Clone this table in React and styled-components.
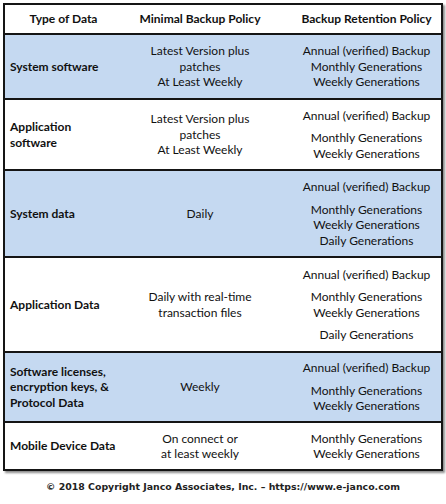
import React from "react";
import styled, { createGlobalStyle } from "styled-components";

const Global = createGlobalStyle`
  html, body { margin: 0; padding: 0; background: #fff; }
  body { font-family: Lato, "Open Sans", sans-serif; color: #111; }
`;

const Page = styled.div`
  width: 446px;
  height: 504px;
  padding: 3px 0 0 3px;
  box-sizing: border-box;
  display: flex;
  flex-direction: column;
`;

const Table = styled.div`
  width: 440px;
  box-sizing: border-box;
  border: 2px solid #151515;
  box-shadow: 2px 2px 2px rgba(0, 0, 0, 0.45);
  display: flex;
  flex-direction: column;
`;

const Row = styled.div`
  display: grid;
  grid-template-columns: 117px 156px 1fr;
  height: ${(p) => p.$h}px;
  box-sizing: border-box;
  background: ${(p) => (p.$blue ? "#c5d9f1" : "#fff")};
  border-bottom: ${(p) => (p.$last ? "none" : "2px solid #151515")};
`;

const Cell = styled.div`
  display: flex;
  flex-direction: column;
  justify-content: center;
  align-items: ${(p) => (p.$left ? "flex-start" : "center")};
  text-align: ${(p) => (p.$left ? "left" : "center")};
  padding-left: ${(p) => p.$pl || 0}px;
  font-size: 12px;
  line-height: 15.5px;
  font-weight: ${(p) => (p.$bold ? 700 : 400)};
  white-space: nowrap;
`;

const Line = styled.div`
  margin-top: ${(p) => (p.$gap ? 7 : 0)}px;
`;

const Footer = styled.div`
  margin-top: 10px;
  width: 440px;
  text-align: center;
  font-family: "DejaVu Sans", Verdana, sans-serif;
  font-weight: 700;
  font-size: 9.4px;
  color: #222;
`;

const rows = [
  {
    h: 65, blue: true,
    c1: ["System software"],
    c2: ["Latest Version plus", "patches", "At Least Weekly"],
    c3: [["Annual (verified) Backup"], ["Monthly Generations"], ["Weekly Generations"]],
  },
  {
    h: 71,
    c1: ["Application", "software"],
    c2: ["Latest Version plus", "patches", "At Least Weekly"],
    c3: [["Annual (verified) Backup"], ["Monthly Generations", true], ["Weekly Generations"]],
  },
  {
    h: 87, blue: true,
    c1: ["System data"],
    c2: ["Daily"],
    c3: [["Annual (verified) Backup"], ["Monthly Generations", true], ["Weekly Generations"], ["Daily Generations"]],
  },
  {
    h: 95,
    c1: ["Application Data"],
    c2: ["Daily with real-time", "transaction files"],
    c3: [["Annual (verified) Backup"], ["Monthly Generations", true], ["Weekly Generations"], ["Daily Generations", true]],
  },
  {
    h: 70, blue: true,
    c1: ["Software licenses,", "encryption keys, &", "Protocol Data"],
    c2: ["Weekly"],
    c3: [["Annual (verified) Backup"], ["Monthly Generations", true], ["Weekly Generations"]],
  },
  {
    h: 46, last: true,
    c1: ["Mobile Device Data"],
    c2: ["On connect or", "at least weekly"],
    c3: [["Monthly Generations"], ["Weekly Generations"]],
  },
];

export default function App() {
  return (
    <Page>
      <Global />
      <Table>
        <Row $h={30}>
          <Cell $bold>Type of Data</Cell>
          <Cell $bold>Minimal Backup Policy</Cell>
          <Cell $bold $pl={14}>Backup Retention Policy</Cell>
        </Row>
        {rows.map((r, i) => (
          <Row key={i} $h={r.h} $blue={r.blue} $last={r.last}>
            <Cell $left $bold $pl={5}>
              {r.c1.map((t) => <Line key={t}>{t}</Line>)}
            </Cell>
            <Cell>
              {r.c2.map((t) => <Line key={t}>{t}</Line>)}
            </Cell>
            <Cell $pl={14}>
              {r.c3.map(([t, g]) => <Line key={t} $gap={g}>{t}</Line>)}
            </Cell>
          </Row>
        ))}
      </Table>
      <Footer>© 2018 Copyright Janco Associates, Inc. – https://www.e-janco.com</Footer>
    </Page>
  );
}
